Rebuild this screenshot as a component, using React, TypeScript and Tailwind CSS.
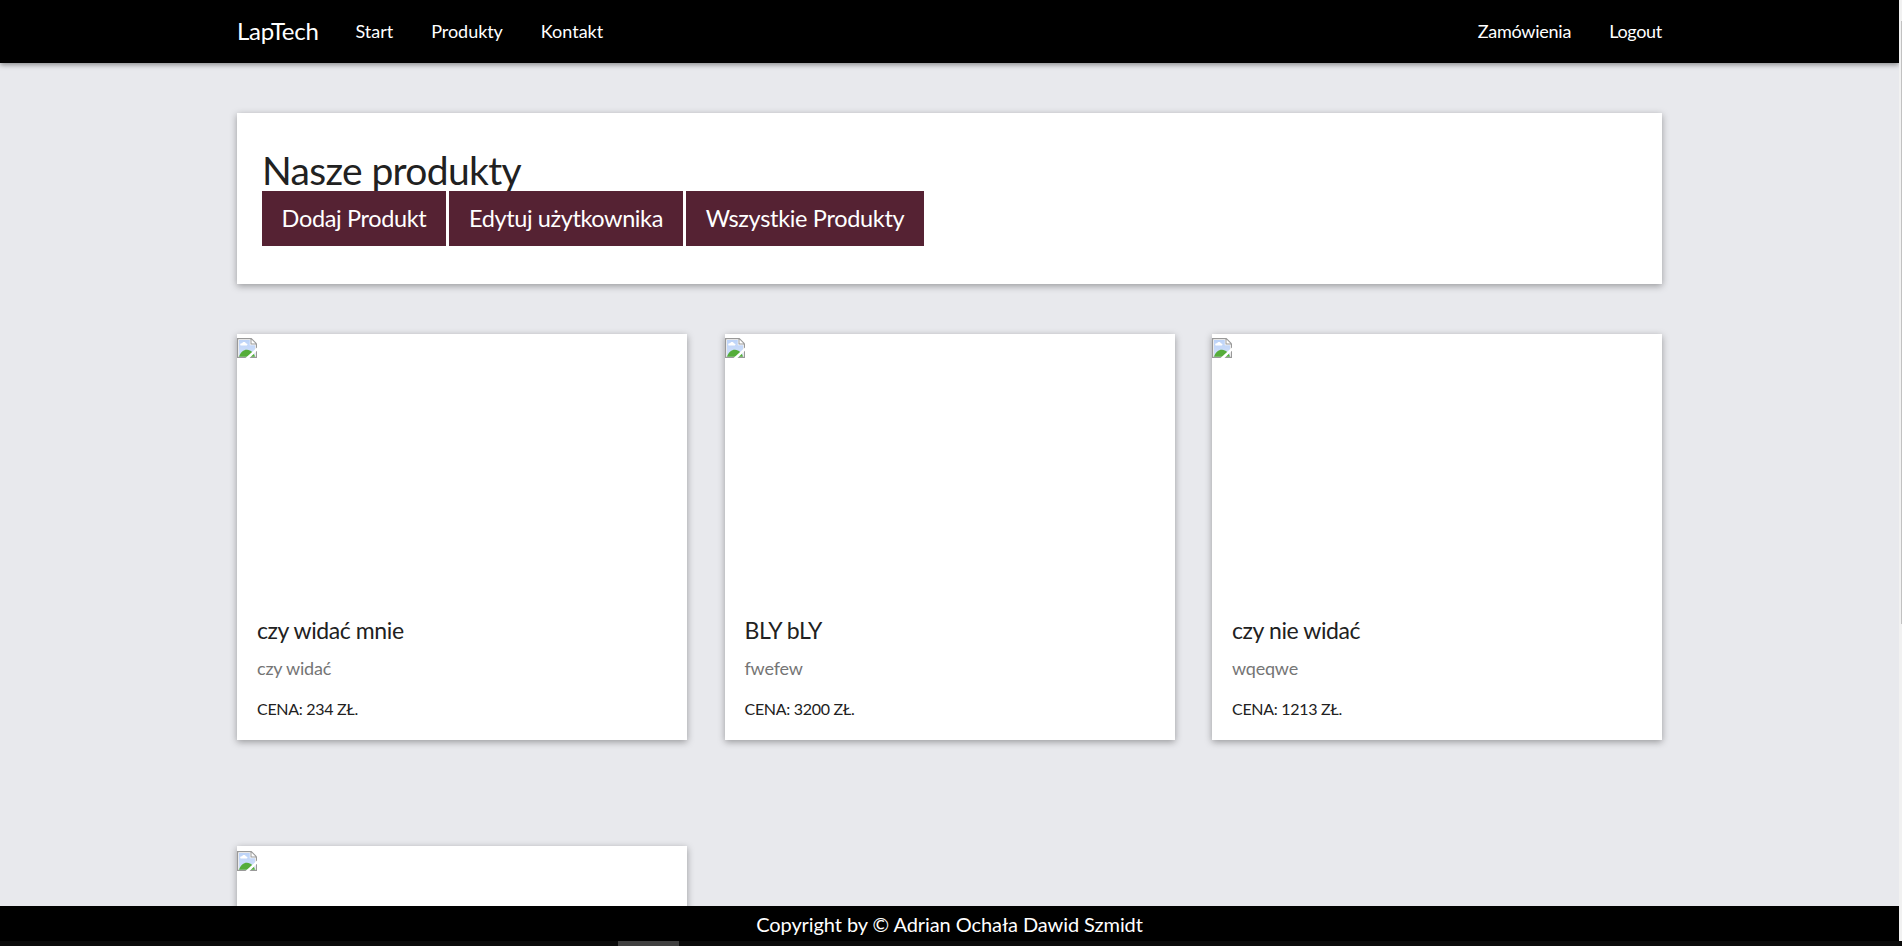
import React from "react";

type Product = { name: string; description: string; price: string };

const products: Product[] = [
  { name: "czy widać mnie", description: "czy widać", price: "234" },
  { name: "BLY bLY", description: "fwefew", price: "3200" },
  { name: "czy nie widać", description: "wqeqwe", price: "1213" },
];

function MissingImage() {
  return (
    <svg width="20" height="20" viewBox="0 0 20 20" className="block" aria-hidden="true">
      <defs>
        <linearGradient id="sky" x1="0" y1="0" x2="0" y2="1">
          <stop offset="0" stopColor="#bcd3f8" />
          <stop offset="1" stopColor="#d3e1fa" />
        </linearGradient>
      </defs>
      <path d="M0 0H14.500L20 5.500V20H0Z" fill="#999" />
      <path d="M1.200 1.200H13.500V6.500H18.800V18.800H1.200Z" fill="#fff" />
      <path d="M2 2H12.800V7.200H18V18.800H2Z" fill="url(#sky)" />
      <path d="M14.500 1.500V5.500H18.500Z" fill="#fff" />
      <path d="M3.500 7.500C2.500 5.800 4.200 5 5 5.500C5.500 3.500 8.500 3.500 9 5.500C10.500 5.200 11 7 9.800 7.500Z" fill="#fff" />
      <path d="M2 18.800C3.500 14 7 11.600 10 11.800C14 12 17 15 18 18.800Z" fill="#55ad3a" />
      <path d="M20 9.500V12.800L12.500 20H8.500Z" fill="#fff" />
    </svg>
  );
}

function ProductCard({ product }: { product?: Product }) {
  return (
    <article className="h-[406px] w-[450px] bg-white pt-1 shadow-[0_2px_7px_rgba(0,0,0,0.35)]">
      <div className={product ? "h-[275px]" : "h-[275px] pt-px"}>
        <MissingImage />
      </div>
      {product && (
        <div className="px-5 text-[#212121]">
          <h2 className="h-[38px] text-[23px] leading-[34px] tracking-[-0.4px]">{product.name}</h2>
          <p className="h-[41px] text-lg leading-[34px] tracking-[-0.2px] text-[#757575]">{product.description}</p>
          <p className="text-base leading-[34px] tracking-[-0.3px]">CENA: {product.price} ZŁ.</p>
        </div>
      )}
    </article>
  );
}

export default function App() {
  return (
    <div className="flex h-[946px] flex-col overflow-hidden bg-[#0b0b0b] font-['Lato',sans-serif]">
      <div className="flex h-[941px]">
        <div className="flex min-w-0 flex-1 flex-col overflow-hidden bg-[#e8e9ed]">
          <header className="relative h-[63px] shrink-0 bg-black shadow-[0_2px_5px_rgba(0,0,0,0.4)]">
            <nav className="mx-auto flex h-full w-[1425px] items-center pb-0.5 text-lg text-white">
              <span className="text-2xl tracking-[-0.3px]">LapTech</span>
              <a className="ml-[37px]">Start</a>
              <a className="ml-[38px] tracking-[-0.05px]">Produkty</a>
              <a className="ml-[38px]">Kontakt</a>
              <a className="ml-auto tracking-[-0.25px]">Zamówienia</a>
              <a className="ml-[38px] tracking-[-0.3px]">Logout</a>
            </nav>
          </header>
          <main className="mx-auto flex min-h-0 w-[1425px] flex-1 flex-col pt-[50px]">
            <section className="h-[171px] shrink-0 bg-white px-[25px] pt-[33px] shadow-[0_2px_7px_rgba(0,0,0,0.35)]">
              <h1 className="h-[45px] text-[39px] leading-[48px] tracking-[-0.65px] text-[#212121]">Nasze produkty</h1>
              <div className="relative flex gap-[3px] text-[23.5px] text-white">
                <button className="h-[55px] w-[184px] whitespace-nowrap bg-[#552233] tracking-[-0.36px]">Dodaj Produkt</button>
                <button className="h-[55px] w-[234px] whitespace-nowrap bg-[#552233] tracking-[-0.4px]">Edytuj użytkownika</button>
                <button className="h-[55px] w-[238px] whitespace-nowrap bg-[#552233] tracking-[-0.32px]">Wszystkie Produkty</button>
              </div>
            </section>
            <section className="mt-[50px] grid shrink-0 grid-cols-[450px_450px_450px] justify-between gap-y-[106px]">
              {products.map((product) => (
                <ProductCard key={product.name} product={product} />
              ))}
              <ProductCard />
            </section>
          </main>
          <footer className="relative flex h-[35px] shrink-0 items-center justify-center bg-black text-xl tracking-[-0.08px] text-white">
            Copyright by © Adrian Ochała Dawid Szmidt
          </footer>
        </div>
        <div className="flex w-[3px] flex-col bg-[#f1f1f1] pl-[2px] pt-[21px]">
          <div className="h-[603px] bg-[#c1c1c1]" />
        </div>
      </div>
      <div className="flex h-[5px] pl-[618px]">
        <div className="w-[61px] bg-[#404040]" />
      </div>
    </div>
  );
}
